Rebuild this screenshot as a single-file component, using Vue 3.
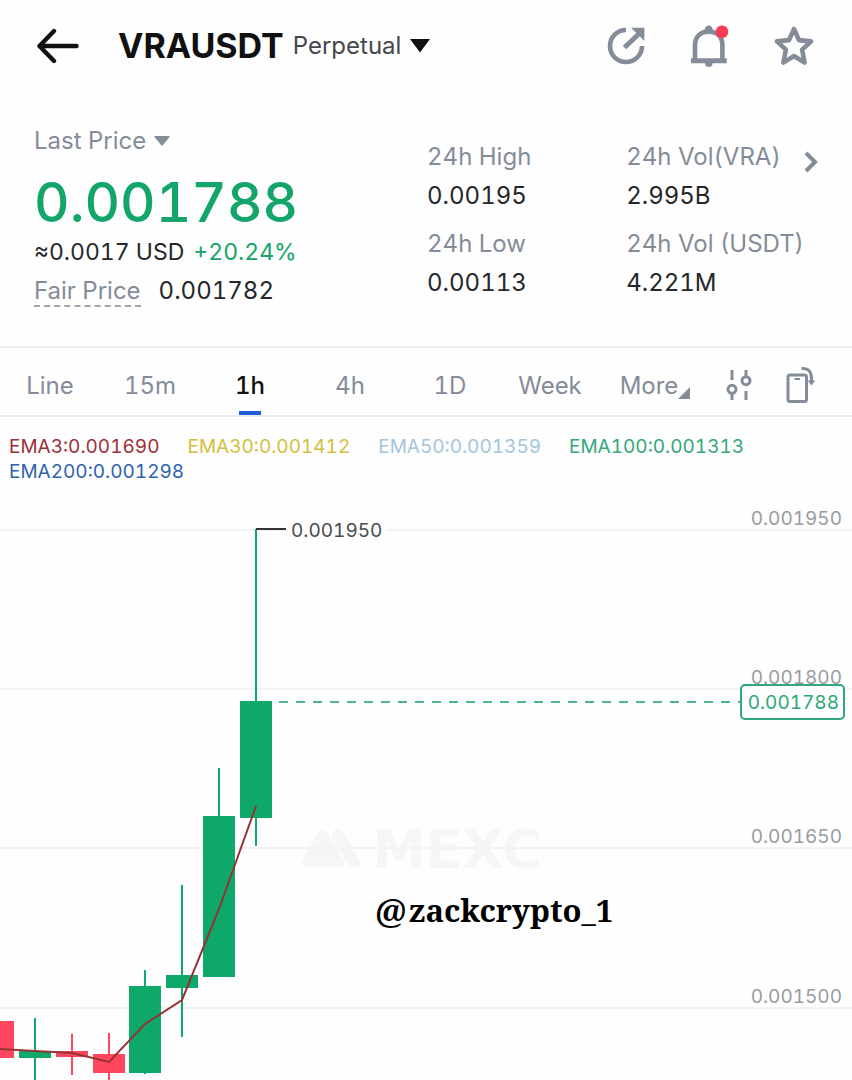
<template>
  <div class="page">
    <header class="topbar">
      <button class="icon-btn" aria-label="Back">
        <svg width="44" height="36" viewBox="0 0 44 36" fill="none" stroke="#111" stroke-width="4.4" stroke-linecap="round" stroke-linejoin="round"><path d="M18 3 3.5 18 18 33"/><path d="M4 18h36.500"/></svg>
      </button>
      <button class="pair">
        <h1 class="symbol">VRAUSDT</h1>
        <span class="kind">Perpetual</span>
        <svg width="20" height="14" viewBox="0 0 20 14"><path d="M0 0h20L10 13.500z" fill="#111"/></svg>
      </button>
      <div class="actions">
        <button class="icon-btn" aria-label="Share">
          <svg width="40" height="40" viewBox="0 0 40 40" fill="none" stroke="#858c99" stroke-width="4.600"><path d="M20 4A16 16 0 1 0 36 20"/><path d="M18.500 21.500 33 7.700" stroke-width="5"/><path d="M25 1.700h13.400v13.400z" fill="#858c99" stroke="none"/></svg>
        </button>
        <button class="icon-btn" aria-label="Alerts">
          <svg width="40" height="46" viewBox="0 0 40 46"><path d="M6 38V22.500C6 13.500 11.500 8.600 19.700 8.600S33.400 13.500 33.400 22.500V38" fill="none" stroke="#858c99" stroke-width="4.600"/><path d="M2 35.300h35.700v5H2zM15.500 7.500a4.200 5 0 0 1 8.400 0zM16 40h7.600a3.800 4 0 0 1-7.600 0z" fill="#858c99"/><circle cx="33" cy="8.700" r="6.300" fill="#fb3b53"/></svg>
        </button>
        <button class="icon-btn" aria-label="Favourite">
          <svg width="44" height="44" viewBox="0 0 44 44" fill="none" stroke="#858c99" stroke-width="4.600" stroke-linejoin="round"><path d="M22 5 27 16.100 39.100 17.400 30.100 25.600 32.600 38.600 22 32 11.400 38.600 13.900 25.600 4.900 17.400 17 16.100z"/></svg>
        </button>
      </div>
    </header>

    <section class="ticker">
      <div class="price">
        <button class="muted price-type">
          Last Price
          <svg width="16" height="10" viewBox="0 0 16 10"><path d="M1 0h14q1 0 .5 1L9 9q-1 1-2 0L.5 1Q0 0 1 0z" fill="#858c99"/></svg>
        </button>
        <strong class="last">0.001788</strong>
        <p class="row approx"><span>≈0.0017 USD</span><span class="up">+20.24%</span></p>
        <p class="row fair"><span class="muted dashed">Fair Price</span><span>0.001782</span></p>
      </div>
      <dl class="stats">
        <div v-for="s in stats" :key="s.label">
          <dt class="muted">{{ s.label }}</dt>
          <dd>{{ s.value }}</dd>
        </div>
      </dl>
      <button class="icon-btn more-stats" aria-label="More statistics">
        <svg width="14" height="22" viewBox="0 0 14 22" fill="none" stroke="#858c99" stroke-width="4"><path d="M2 2l9 9-9 9"/></svg>
      </button>
    </section>

    <nav class="tabs">
      <button
        v-for="t in intervals"
        :key="t"
        class="tab"
        :class="{ active: t === current }"
        @click="current = t"
      >{{ t }}</button>
      <button class="tab tab-more">
        More<svg width="12" height="12" viewBox="0 0 12 12"><path d="M12 0v12H0z" fill="#858c99"/></svg>
      </button>
      <div class="tools">
        <button class="icon-btn" aria-label="Indicators">
          <svg width="28" height="36" viewBox="0 0 28 36" fill="none" stroke="#858c99" stroke-width="3"><path d="M7 3v10M7 27v6M21 3v6M21 24v9"/><circle cx="7" cy="22.300" r="4"/><circle cx="21" cy="13.700" r="4"/></svg>
        </button>
        <button class="icon-btn" aria-label="Rotate screen">
          <svg width="30" height="38" viewBox="0 0 30 38" fill="none" stroke="#858c99" stroke-width="3"><rect x="2" y="9" width="18.500" height="26.500" rx="2"/><path d="M8.500 13h5.500" stroke-width="2"/><path d="M15.500 2.500c7-.5 10 3 10 10V16"/><path d="M21.700 14.500h7.600l-3.800 5z" fill="#858c99" stroke="none"/></svg>
        </button>
      </div>
    </nav>

    <ul class="legend">
      <li v-for="e in emas" :key="e.name" :class="e.name.toLowerCase()">{{ e.name }}:{{ e.value }}</li>
    </ul>

    <svg class="chart" viewBox="0 0 852 590">
      <!-- watermark -->
      <g class="watermark">
        <path d="M303 369 317 344q5-8 11 0l17 29q1 4-4 4h-34q-7 0-4-8z"/>
        <path d="M333 342q5-7 10 0l16 27q4 7-4 8-5 1-8-4l-15-26q-1-3 1-5z"/>
        <text x="372" y="378">MEXC</text>
      </g>

      <g v-for="g in grid" :key="g.label">
        <line class="grid" x1="0" x2="852" :y1="g.y" :y2="g.y"/>
        <text class="axis" x="842" :y="g.y - 5" text-anchor="end">{{ g.label }}</text>
      </g>

      <g v-for="c in candles" :key="c.x" :class="c.up ? 'green' : 'red'">
        <rect :x="c.x - 1" :y="c.high" width="2" :height="c.low - c.high"/>
        <rect :x="c.x - 16" :y="c.top" width="32" :height="c.bottom - c.top"/>
      </g>
      <polyline class="ema-line" :points="emaPoints"/>

      <!-- period high -->
      <line class="high-mark" x1="256" x2="286" y1="39" y2="39"/>
      <rect x="288" y="30" width="98" height="20" fill="#fefefe"/>
      <text class="high-label" x="291" y="47">0.001950</text>

      <!-- current price -->
      <line class="price-line" x1="279" x2="741" y1="212" y2="212"/>
      <rect class="price-tag" x="741" y="195" width="103" height="34" rx="4"/>
      <text class="price-text" x="839" y="219" text-anchor="end">0.001788</text>

      <text class="handle"><tspan class="at" x="375" y="434">@</tspan><tspan x="409" y="432">zackcrypto_1</tspan></text>
    </svg>
  </div>
</template>

<script setup>
import { ref, computed } from 'vue'

const stats = [
  { label: '24h High', value: '0.00195' },
  { label: '24h Vol(VRA)', value: '2.995B' },
  { label: '24h Low', value: '0.00113' },
  { label: '24h Vol (USDT)', value: '4.221M' },
]

const intervals = ['Line', '15m', '1h', '4h', '1D', 'Week']
const current = ref('1h')

const emas = [
  { name: 'EMA3', value: '0.001690' },
  { name: 'EMA30', value: '0.001412' },
  { name: 'EMA50', value: '0.001359' },
  { name: 'EMA100', value: '0.001313' },
  { name: 'EMA200', value: '0.001298' },
]

const grid = [
  { label: '0.001950', y: 40 },
  { label: '0.001800', y: 199 },
  { label: '0.001650', y: 358 },
  { label: '0.001500', y: 518 },
]

const candles = [
  { x: -2, high: 531, top: 531, bottom: 568, low: 568, up: false },
  { x: 35, high: 528, top: 561, bottom: 568, low: 596, up: true },
  { x: 72, high: 544, top: 561, bottom: 567, low: 585, up: false },
  { x: 109, high: 543, top: 564, bottom: 583, low: 596, up: false },
  { x: 145, high: 480, top: 496, bottom: 583, low: 584, up: true },
  { x: 182, high: 395, top: 485, bottom: 498, low: 547, up: true },
  { x: 219, high: 278, top: 326, bottom: 487, low: 487, up: true },
  { x: 256, high: 39, top: 211, bottom: 328, low: 356, up: true },
]

const ema3 = [[0, 559], [35, 561], [72, 563], [109, 572], [145, 534], [182, 510], [219, 419], [256, 316]]
const emaPoints = computed(() => ema3.map(p => p.join(',')).join(' '))
</script>

<style>
body {
  margin: 0;
  background: #fefefe;
}
</style>

<style scoped>
.page {
  font-family: Inter, "Liberation Sans", sans-serif;
  font-size: 24px;
  line-height: 28px;
  font-variant-numeric: tabular-nums;
  color: #25272b;
  overflow: hidden;
}
button {
  font: inherit;
  font-variant-numeric: inherit;
  color: inherit;
  background: none;
  border: 0;
  padding: 0;
  cursor: pointer;
}
svg { display: block; flex-shrink: 0; }
p, dl, dd, ul, h1 { margin: 0; padding: 0; }
.muted { color: #858c99; }
.icon-btn { display: flex; }

.topbar {
  display: flex;
  align-items: center;
  height: 91px;
  padding: 0 36px;
}
.pair {
  display: flex;
  align-items: center;
  gap: 9px;
  margin-left: 38px;
}
.symbol {
  font-size: 34px;
  line-height: 44px;
  font-weight: 700;
  color: #111;
}
.kind { color: #44474c; }
.actions {
  display: flex;
  align-items: center;
  gap: 43px;
  margin-left: auto;
}

.ticker {
  display: flex;
  padding: 36px 34px 39px;
  border-bottom: 2px solid #ebecee;
}
.price { flex: 393; }
.price-type {
  display: flex;
  align-items: center;
  gap: 8px;
}
.last {
  display: block;
  margin: 15px 0 4px;
  font-size: 55px;
  line-height: 64px;
  font-weight: 500;
  color: #13a569;
}
.row {
  display: flex;
  gap: 9px;
  white-space: nowrap;
}
.approx { font-size: 23px; }
.up { color: #13a569; }
.fair {
  gap: 18px;
  margin-top: 11px;
}
.dashed { border-bottom: 2px dashed #a0a5af; }
.stats {
  flex: 377;
  display: grid;
  grid-template-columns: 200fr 177fr;
  align-content: start;
  row-gap: 20px;
  padding-top: 16px;
  white-space: nowrap;
}
.stats dd { margin-top: 11px; }
.more-stats {
  margin-top: 24px;
  align-self: flex-start;
}

.tabs {
  display: flex;
  height: 67px;
  border-bottom: 2px solid #ebecee;
  color: #858c99;
}
.tab {
  position: relative;
  flex: 100;
  min-width: 0;
  padding-top: 8px;
}
.tab.active {
  color: #111;
  font-weight: 500;
}
.tab.active::after {
  content: "";
  position: absolute;
  left: 50%;
  bottom: 0;
  width: 22px;
  height: 4px;
  margin-left: -11px;
  background: #1a5fd6;
}
.tab-more {
  flex: 110;
  display: flex;
  justify-content: center;
  align-items: center;
}
.tab-more svg { margin-top: 14px; }
.tools {
  flex: 127;
  display: flex;
  align-items: center;
  gap: 33px;
  padding: 6px 0 0 15px;
}

.legend {
  display: flex;
  flex-wrap: wrap;
  column-gap: 28px;
  padding: 17px 9px 6px;
  list-style: none;
  font-size: 19px;
  line-height: 25px;
}
.ema3 { color: #9c3038; }
.ema30 { color: #d3bf3f; }
.ema50 { color: #a3c6dc; }
.ema100 { color: #32a878; }
.ema200 { color: #2f63b0; }

.chart {
  width: 100%;
  height: auto;
  font-size: 19px;
}
.grid { stroke: #f3f3f5; stroke-width: 2; }
.axis { fill: #9a9c9f; }
.green { fill: #0fa86b; }
.red { fill: #ff465c; }
.ema-line { fill: none; stroke: #963236; stroke-width: 2; }
.high-mark { stroke: #333; stroke-width: 2; }
.high-label { fill: #4a4c50; }
.price-line { stroke: #4bb68c; stroke-width: 2; stroke-dasharray: 9 8; }
.price-tag { fill: #fefefe; stroke: #2ea878; stroke-width: 2; }
.price-text { fill: #2ea878; }
.watermark { fill: #f5f6f8; }
.watermark text {
  font-family: "DejaVu Sans", sans-serif;
  font-size: 54px;
  font-weight: 700;
}
.handle {
  font-family: "Noto Serif", "DejaVu Serif", "Liberation Serif", serif;
  font-size: 31px;
  font-weight: 700;
  fill: #000;
}
.at { font-size: 34px; }
</style>
